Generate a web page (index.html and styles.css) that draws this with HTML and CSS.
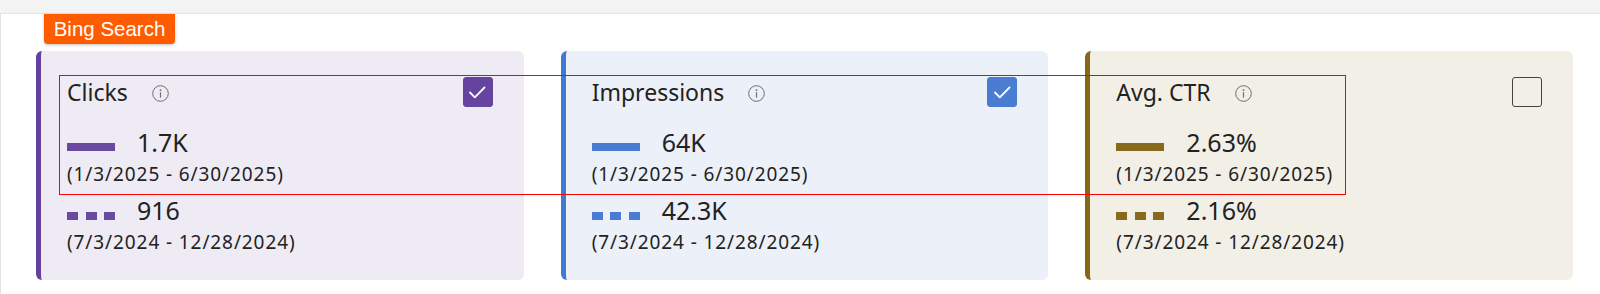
FILE: index.html
```html
<!DOCTYPE html>
<html lang="en">
<head>
<meta charset="utf-8">
<title>Bing Search metrics</title>
<link rel="stylesheet" href="styles.css">
</head>
<body>
<div class="panel">
  <div class="badge">Bing Search</div>
  <div class="cards">
    <div class="card card-clicks">
      <div class="card-head">
        <div class="title">Clicks <svg class="info" width="17" height="17" viewBox="0 0 17 17"><circle cx="8.5" cy="8.5" r="7.8" fill="none" stroke="#6e6e6e" stroke-width="1"/><circle cx="8.5" cy="5.2" r="0.9" fill="#6e6e6e"/><rect x="7.9" y="7.2" width="1.2" height="5.4" fill="#6e6e6e"/></svg></div>
        <div class="check checked"><svg width="30" height="30" viewBox="0 0 30 30"><polyline points="8,15.5 12.8,20.3 22.5,10.5" fill="none" stroke="#fff" stroke-width="1.8" stroke-linecap="round" stroke-linejoin="round"/></svg></div>
      </div>
      <div class="metric">
        <div class="value-row"><span class="bar solid"></span><span class="value">1.7K</span></div>
        <div class="range">(1/3/2025 - 6/30/2025)</div>
      </div>
      <div class="metric">
        <div class="value-row"><span class="bar dashed"><i></i><i></i><i></i></span><span class="value">916</span></div>
        <div class="range">(7/3/2024 - 12/28/2024)</div>
      </div>
    </div>
    <div class="card card-impr">
      <div class="card-head">
        <div class="title">Impressions <svg class="info" width="17" height="17" viewBox="0 0 17 17"><circle cx="8.5" cy="8.5" r="7.8" fill="none" stroke="#6e6e6e" stroke-width="1"/><circle cx="8.5" cy="5.2" r="0.9" fill="#6e6e6e"/><rect x="7.9" y="7.2" width="1.2" height="5.4" fill="#6e6e6e"/></svg></div>
        <div class="check checked"><svg width="30" height="30" viewBox="0 0 30 30"><polyline points="8,15.5 12.8,20.3 22.5,10.5" fill="none" stroke="#fff" stroke-width="1.8" stroke-linecap="round" stroke-linejoin="round"/></svg></div>
      </div>
      <div class="metric">
        <div class="value-row"><span class="bar solid"></span><span class="value">64K</span></div>
        <div class="range">(1/3/2025 - 6/30/2025)</div>
      </div>
      <div class="metric">
        <div class="value-row"><span class="bar dashed"><i></i><i></i><i></i></span><span class="value">42.3K</span></div>
        <div class="range">(7/3/2024 - 12/28/2024)</div>
      </div>
    </div>
    <div class="card card-ctr">
      <div class="card-head">
        <div class="title">Avg. CTR <svg class="info" width="17" height="17" viewBox="0 0 17 17"><circle cx="8.5" cy="8.5" r="7.8" fill="none" stroke="#6e6e6e" stroke-width="1"/><circle cx="8.5" cy="5.2" r="0.9" fill="#6e6e6e"/><rect x="7.9" y="7.2" width="1.2" height="5.4" fill="#6e6e6e"/></svg></div>
        <div class="check"></div>
      </div>
      <div class="metric">
        <div class="value-row"><span class="bar solid"></span><span class="value">2.63%</span></div>
        <div class="range">(1/3/2025 - 6/30/2025)</div>
      </div>
      <div class="metric">
        <div class="value-row"><span class="bar dashed"><i></i><i></i><i></i></span><span class="value">2.16%</span></div>
        <div class="range">(7/3/2024 - 12/28/2024)</div>
      </div>
    </div>
  </div>
  <div class="highlight"></div>
</div>
</body>
</html>
```

FILE: styles.css
```css
* { box-sizing: border-box; }
html, body { margin: 0; padding: 0; }
body {
  background: #f3f3f3;
  font-family: "Noto Sans", "Open Sans", sans-serif;
  color: #222;
  height: 294px;
  overflow: hidden;
}
.panel {
  position: relative;
  margin-top: 13px;
  background: #fff;
  border-top: 1px solid #e3e3e3;
  border-left: 1px solid #e3e3e3;
  height: 281px;
  padding: 0 27px 0 35px;
}
.badge {
  display: inline-flex;
  align-items: center;
  justify-content: center;
  margin-left: 8px;
  width: 131px;
  height: 30px;
  background: #ff5c00;
  color: #fff;
  font-family: "Liberation Sans", Arial, sans-serif;
  font-size: 20.5px;
  border-radius: 0 0 4px 4px;
  box-shadow: 0 1px 3px rgba(0,0,0,0.25);
}
.cards {
  display: flex;
  gap: 37px;
  margin-top: 7px;
}
.card {
  flex: 1;
  height: 229px;
  border-radius: 6px;
  border-left: 5px solid;
  padding: 26px 31px 0 26px;
}
.card-clicks { background: #eeebf4; border-left-color: #6241a0; --c: #6a4a9f; }
.card-impr { background: #ecf0f9; border-left-color: #3f79d5; --c: #4a7dd2; }
.card-ctr { background: #f2efe7; border-left-color: #866716; --c: #886a1c; }
.card-head {
  display: flex;
  align-items: center;
  justify-content: space-between;
  height: 30px;
}
.title {
  display: flex;
  align-items: center;
  gap: 24px;
  font-size: 23px;
  line-height: 30px;
}
.info { display: block; margin-top: 3px; }
.check {
  width: 30px;
  height: 30px;
  border-radius: 3px;
  border: 1.5px solid #444;
}
.check svg { display: block; margin: -1.5px; }
.card-clicks .check.checked { background: #6643a0; border-color: #6643a0; }
.card-impr .check.checked { background: #4a7dd2; border-color: #4a7dd2; }
.metric { display: flex; flex-direction: column; gap: 3px; }
.card-head + .metric { margin-top: 18px; }
.metric + .metric { margin-top: 7px; }
.value-row {
  display: flex;
  align-items: flex-start;
  gap: 22px;
  height: 34px;
}
.value { font-size: 25px; line-height: 34px; }
.bar { width: 48px; height: 8px; margin-top: 18px; flex: none; }
.bar.solid { background: var(--c); }
.bar.dashed { display: flex; justify-content: space-between; margin-top: 19px; }
.bar.dashed i { width: 11px; height: 8px; background: var(--c); }
.range {
  font-size: 19px;
  line-height: 24px;
  letter-spacing: 0.9px;
}
.highlight {
  position: absolute;
  left: 58px;
  top: 61px;
  width: 1287px;
  height: 120px;
  border: 1.5px solid #ff0000;
  pointer-events: none;
}
```
